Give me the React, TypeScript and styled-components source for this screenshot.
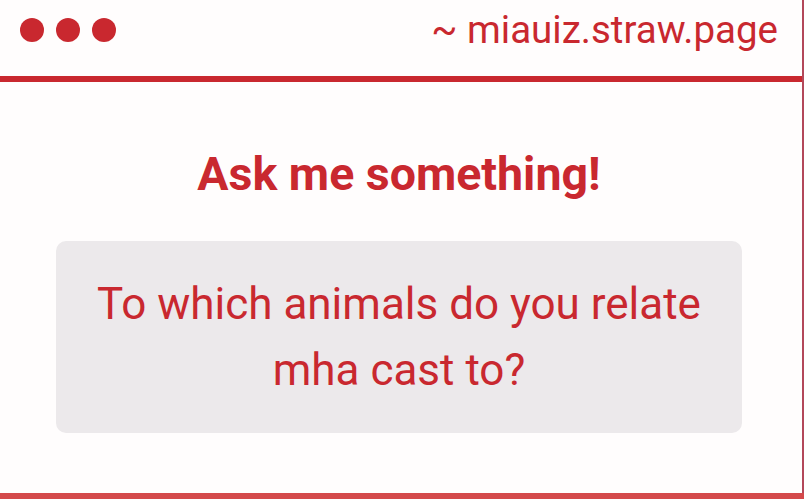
import React from "react";
import styled, { createGlobalStyle } from "styled-components";

const Global = createGlobalStyle`
  html, body { margin: 0; padding: 0; background: #ffffff; }
  body { font-family: Roboto, "Liberation Sans", sans-serif; }
`;

const RED = "#c9282f";

const Frame = styled.div`
  width: 804px;
  height: 499px;
  display: flex;
  flex-direction: column;
  box-sizing: border-box;
  overflow: hidden;
`;

const Window = styled.div`
  flex: 1;
  background: #fffdfd;
  border-right: 2px solid #b3485a;
  display: flex;
  flex-direction: column;
`;

const Header = styled.header`
  height: 82px;
  box-sizing: border-box;
  padding: 18px 24px 0 20px;
  border-bottom: 6px solid ${RED};
  display: flex;
  justify-content: space-between;
  align-items: flex-start;
`;

const Dots = styled.div`
  display: flex;
  gap: 12px;
`;

const Dot = styled.span`
  width: 24px;
  height: 24px;
  border-radius: 50%;
  background: ${RED};
`;

const Url = styled.div`
  font-family: Roboto, sans-serif;
  font-size: 38.5px;
  line-height: 24px;
  height: 24px;
  color: ${RED};
`;

const Main = styled.main`
  flex: 1;
  display: flex;
  flex-direction: column;
  align-items: stretch;
  padding: 66px 60px 0 56px;
`;

const Title = styled.h1`
  margin: 0;
  text-align: center;
  font-family: Roboto, sans-serif;
  font-weight: 700;
  font-size: 46.5px;
  line-height: 52px;
  color: ${RED};
`;

const Card = styled.div`
  margin-top: 41px;
  height: 192px;
  box-sizing: border-box;
  background: #ece9eb;
  border-radius: 10px;
  display: flex;
  align-items: center;
  justify-content: center;
  padding: 0 20px;
`;

const Question = styled.p`
  margin: 0;
  text-align: center;
  font-family: Roboto, sans-serif;
  font-size: 44px;
  line-height: 66px;
  color: ${RED};
`;

const BottomBar = styled.div`
  height: 6px;
  background: #d4494b;
`;

export default function App() {
  return (
    <>
      <Global />
      <Frame>
        <Window>
          <Header>
            <Dots>
              <Dot />
              <Dot />
              <Dot />
            </Dots>
            <Url>~ miauiz.straw.page</Url>
          </Header>
          <Main>
            <Title>Ask me something!</Title>
            <Card>
              <Question>
                To which animals do you relate
                <br />
                mha cast to?
              </Question>
            </Card>
          </Main>
        </Window>
        <BottomBar />
      </Frame>
    </>
  );
}
